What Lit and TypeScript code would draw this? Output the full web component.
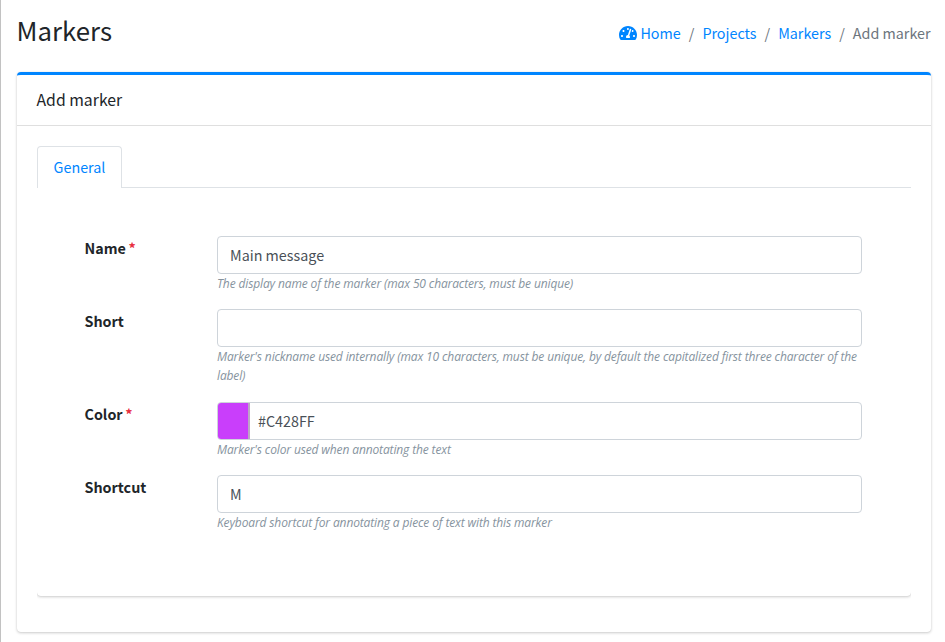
import { LitElement, html, css, nothing } from "lit";
import { customElement } from "lit/decorators.js";
import { styleMap } from "lit/directives/style-map.js";

interface Field {
  label: string;
  value: string;
  hint: string;
  required?: boolean;
  swatch?: string;
}

const fields: Field[] = [
  { label: "Name", required: true, value: "Main message", hint: "The display name of the marker (max 50 characters, must be unique)" },
  { label: "Short", value: "", hint: "Marker's nickname used internally (max 10 characters, must be unique, by default the capitalized first three character of the label)" },
  { label: "Color", required: true, value: "#C428FF", swatch: "#c93efb", hint: "Marker's color used when annotating the text" },
  { label: "Shortcut", value: "M", hint: "Keyboard shortcut for annotating a piece of text with this marker" },
];

@customElement("app-root")
export class AppRoot extends LitElement {
  static styles = css`
    * { box-sizing: border-box; }
    :host {
      display: block;
      height: 642px;
      overflow: hidden;
      border-left: 1px solid #c2c2c2;
      padding: 0 14px 0 16px;
      background: #fff;
      color: #212529;
      font: 14.33px/24px "Noto Sans CJK SC", "Noto Sans", sans-serif;
    }
    .top { display: flex; justify-content: space-between; height: 72px; padding-top: 14px; }
    h1 { margin: -1px 0 0 -.5px; font-size: 25.8px; line-height: 34px; font-weight: 400; }
    .crumbs { display: flex; margin: 7px .5px 0 0; color: #6c757d; white-space: nowrap; }
    .crumbs a { color: #0085ff; }
    .crumbs svg { width: 18px; height: 16px; fill: #0085ff; vertical-align: -2px; margin-right: 3.5px; }
    .sep { padding: 0 8px; }
    .card {
      height: 560px;
      border-top: 3px solid #0085ff;
      border-radius: 4px;
      box-shadow: 0 0 1px rgba(0, 0, 0, .125), 0 1px 3px rgba(0, 0, 0, .2);
    }
    .head { height: 51px; padding: 13px 19.5px 0; border-bottom: 1px solid #dfdfdf; font-size: 15.8px; }
    .body { padding: 20px; }
    .panel {
      height: 450px;
      border-radius: 4px;
      clip-path: inset(0 0 -5px 0);
      display: flex;
      flex-direction: column;
    }
    .tabs { display: flex; height: 42px; border-bottom: 1px solid #dee2e6; }
    .tab {
      width: 85px; height: 42px; padding-top: 8px; text-align: center; color: #0085ff;
      background: #fff; border: 1px solid #dee2e6; border-bottom: 0; border-radius: 4px 4px 0 0;
    }
    .form {
      flex: 1; padding: 48px 49px 0 47.5px; border-radius: 0 0 4px 4px;
      box-shadow: 0 0 1px rgba(0, 0, 0, .125), 0 1px 3px rgba(0, 0, 0, .2);
      clip-path: inset(0 0 -5px 0);
    }
    .row { display: flex; margin-bottom: 16px; }
    .label { width: 132.5px; font-weight: 700; }
    .req { color: #e8303f; margin-left: -.7px; }
    .control { flex: 1; min-width: 0; }
    .input {
      display: flex; align-items: center; height: 38px; overflow: hidden;
      border: 1px solid #ced4da; border-radius: 4px; color: #495057; padding-left: 12px;
    }
    .input.color { padding-left: 0; }
    .swatch { width: 32px; height: 36px; border-right: 2px solid #bca5c4; margin-right: 8px; }
    .hint { font-family: "Open Sans", sans-serif; font-stretch: 90%; font-size: 12px; line-height: 19.2px; font-style: italic; color: #86939e; letter-spacing: -.13px; }
  `;

  render() {
    return html`
      <header class="top">
        <h1>Markers</h1>
        <nav class="crumbs">
          <a><svg viewBox="0 0 576 512"><path d="M288 32C128.94 32 0 160.94 0 320c0 52.8 14.25 102.26 39.06 144.8 5.61 9.62 16.3 15.2 27.44 15.2h443c11.14 0 21.83-5.58 27.44-15.2C561.75 422.26 576 372.8 576 320c0-159.06-128.94-288-288-288zm0 64c14.71 0 26.58 10.13 30.32 23.65-1.11 2.26-2.64 4.23-3.45 6.67l-9.22 27.67c-5.13 3.49-10.97 6.01-17.64 6.01-17.67 0-32-14.33-32-32S270.33 96 288 96zM96 384c-17.67 0-32-14.33-32-32s14.33-32 32-32 32 14.33 32 32-14.33 32-32 32zm48-160c-17.67 0-32-14.33-32-32s14.33-32 32-32 32 14.33 32 32-14.33 32-32 32zm246.77-72.41l-61.33 184C343.13 347.33 352 364.54 352 384c0 11.72-3.38 22.55-8.88 32H232.88c-5.5-9.45-8.88-20.28-8.88-32 0-33.94 26.5-61.43 59.9-63.59l61.34-184.01c4.17-12.56 17.73-19.45 30.36-15.17 12.57 4.19 19.35 17.79 15.17 30.36zm14.66 57.2l15.52-46.55c3.47-1.29 7.13-2.23 11.05-2.23 17.67 0 32 14.33 32 32s-14.33 32-32 32c-11.38-.01-20.89-6.28-26.57-15.22zM480 384c-17.67 0-32-14.33-32-32s14.33-32 32-32 32 14.33 32 32-14.33 32-32 32z"/></svg>Home</a>
          <span class="sep">/</span><a>Projects</a>
          <span class="sep">/</span><a>Markers</a>
          <span class="sep">/</span><span>Add marker</span>
        </nav>
      </header>
      <section class="card">
        <div class="head">Add marker</div>
        <div class="body">
          <div class="panel">
            <div class="tabs"><div class="tab">General</div></div>
            <div class="form">
              ${fields.map((f) => html`
                <div class="row">
                  <div class="label">${f.label}${f.required ? html` <span class="req">*</span>` : nothing}</div>
                  <div class="control">
                    <div class="input ${f.swatch ? "color" : ""}">
                      ${f.swatch ? html`<span class="swatch" style=${styleMap({ background: f.swatch })}></span>` : nothing}
                      <span>${f.value}</span>
                    </div>
                    <div class="hint">${f.hint}</div>
                  </div>
                </div>`)}
            </div>
          </div>
        </div>
      </section>
    `;
  }
}
